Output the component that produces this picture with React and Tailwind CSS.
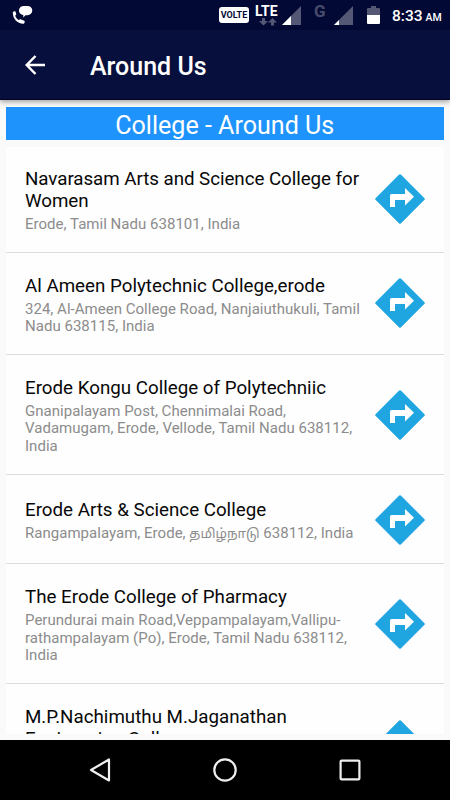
import React from "react";

const colleges = [
	{
		id: 1,
		height: "h-[106px] pt-[21px]",
		gap: "mt-[4.500px]",
		iconTop: "mt-[6px]",
		tracking: "tracking-[-0.05px]",
		title: ["Navarasam Arts and Science College for", "Women"],
		address: ["Erode, Tamil Nadu 638101, India"],
	},
	{
		id: 2,
		height: "h-[102px] pt-[22px]",
		gap: "mt-[4px]",
		iconTop: "mt-[3.5px]",
		title: ["Al Ameen Polytechnic College,erode"],
		address: ["324, Al-Ameen College Road, Nanjaiuthukuli, Tamil", "Nadu 638115, India"],
	},
	{
		id: 3,
		height: "h-[120.5px] pt-[22.5px]",
		gap: "mt-[3.5px]",
		iconTop: "mt-[12.5px]",
		title: ["Erode Kongu College of Polytechniic"],
		address: ["Gnanipalayam Post, Chennimalai Road,", "Vadamugam, Erode, Vellode, Tamil Nadu 638112,", "India"],
	},
	{
		id: 4,
		height: "h-[88.5px] pt-[24px]",
		gap: "mt-[3.5px]",
		iconTop: "mt-[-4.5px]",
		title: ["Erode Arts & Science College"],
		address: [
			<>
				Rangampalayam, Erode, <span className="text-[13.4px] leading-none">தமிழ்நாடு</span> 638112, India
			</>,
		],
	},
	{
		id: 5,
		height: "h-[120.5px] pt-[22px]",
		gap: "mt-[4.500px]",
		iconTop: "mt-[13px]",
		title: ["The Erode College of Pharmacy"],
		address: ["Perundurai main Road,Veppampalayam,Vallipu-", "rathampalayam (Po), Erode, Tamil Nadu 638112,", "India"],
	},
	{
		id: 6,
		height: "h-[120.5px] pt-[22px]",
		gap: "mt-[3.5px]",
		iconTop: "mt-[14px]",
		title: ["M.P.Nachimuthu M.Jaganathan", "Engineering College"],
		address: [],
	},
];

const DirectionsIcon = () => (
	<svg viewBox="0 0 50 50" className="w-[50px] h-[50px]">
		<path d="M24.2 .6q.8-.7 1.6 0L49.500 24.200q.7.800 0 1.600L25.800 49.400q-.8.700-1.600 0L.5 25.800q-.7-.8 0-1.600Z" fill="#1fa5e0" />
		<path d="M15 33V21.500q0-1.500 1.500-1.500H30V14l9 8.700-9 8.800V26H20v7Z" fill="#fff" />
	</svg>
);

const Signal = ({ level }) => (
	<svg viewBox="0 0 19 19" className="w-[19px] h-[19px]">
		<path d="M19 0v19H0Z" fill="#555875" />
		<path d={`M0 19L${level} ${19 - level}V19Z`} fill="#fff" />
	</svg>
);

const StatusBar = () => (
	<div className="flex h-[30px] shrink-0 bg-[#020935] pl-[12px] text-white">
		<svg viewBox="0 0 22 20" className="mt-[5px] w-[22px] h-[20px]" fill="#fff">
			<path d="M12 1h3.500a4.700 4.500 0 0 1 0 9.200h-2L11.300 12.400V10A4.700 4.500 0 0 1 12 1Z" />
			<path d="M1.600 6.600l1.200-.3q.8 0 .9.700l.5 2.300q.1.600-.5 1l-.6.500q1 2.800 3.600 4.400l.8-.8q.5-.4 1.100-.2l3.600 1.600q.7.300.5 1l-.3 1.200q-.2.700-.9.800C5.500 19 .8 14 .8 7.600q0-.7.800-1Z" />
		</svg>
		<div className="ml-[185px] mt-[7px] flex h-[16px] w-[30px] items-center justify-center rounded-[3px] bg-[#fefefe] text-[9px] font-bold leading-none text-[#020935]">
			VOLTE
		</div>
		<div className="ml-[6px] w-[23px] pt-[5px]">
			<div className="text-[14px] font-bold leading-[13px]">LTE</div>
			<svg viewBox="0 0 18 8" className="ml-[4px] w-[18px] h-[8px]" fill="#555875">
				<path d="M3 0h3v3h3L4.500 7.500 0 3h3Z" />
				<path d="M12 7.500h3v-3h3L13.500 0 9 4.500h3Z" />
			</svg>
		</div>
		<div className="ml-[4px] mt-[6px]"><Signal level={9} /></div>
		<div className="ml-[13px] mt-[3px] w-[14px] text-[17px] font-bold leading-[17px] text-[#484b6b]">G</div>
		<div className="ml-[6px] mt-[6px]"><Signal level={5} /></div>
		<svg viewBox="0 0 13 19" className="ml-[14px] mt-[6px] w-[13px] h-[19px]">
			<path d="M4 0h5v2h3q1 0 1 1v6H0V3q0-1 1-1h3Z" fill="#555875" />
			<path d="M0 9h13v8q0 1-1 1H1q-1 0-1-1Z" fill="#fff" />
		</svg>
		<div className="ml-[12px] flex items-baseline whitespace-nowrap pt-[7px] font-medium leading-[19px]">
			<span className="text-[15.5px]">8:33</span>
			<span className="ml-[3px] text-[10.5px]">AM</span>
		</div>
	</div>
);

const CollegeRow = ({ college }) => (
	<li className={`flex shrink-0 justify-between border-b-[1.5px] border-[#dcdcdc] px-[19px] ${college.height}`}>
		<div className="whitespace-nowrap">
			<h2 className={`text-[18.75px] leading-[22px] text-[#080808] ${college.tracking || ""}`}>
				{college.title.map((line, i) => <span key={i} className="block">{line}</span>)}
			</h2>
			<p className={`text-[15px] leading-[17.5px] tracking-[0.025px] text-[#8c8c8c] ${college.gap}`}>
				{college.address.map((line, i) => <span key={i} className="block h-[17.5px]">{line}</span>)}
			</p>
		</div>
		<div className={college.iconTop}>
			<DirectionsIcon />
		</div>
	</li>
);

const App = () => {
	return (
		<div className="flex h-[800px] w-[450px] flex-col overflow-hidden bg-[#fafafa] font-[Roboto,'Noto_Sans_Tamil','Noto_Sans',sans-serif]">
			<StatusBar />
			<header className="z-10 flex h-[70px] shrink-0 items-center border-b border-[#01041c] bg-[#07103d] pl-[25px] text-white shadow-[0_2px_5px_rgba(0,0,0,0.35)]">
				<svg viewBox="0 0 20 20" className="w-[20px] h-[20px]" fill="none" stroke="#fff" strokeWidth="2.5">
					<path d="M20 10H2M10.500 1L1.700 10l8.800 9" />
				</svg>
				<h1 className="ml-[45px] mt-[4px] text-[25px] font-medium leading-[30px]">Around Us</h1>
			</header>
			<main className="flex min-h-0 flex-1 flex-col pl-[6px] pr-[6.5px] pb-[6.5px] pt-[6.5px]">
				<div className="h-[33.5px] shrink-0 bg-[#1f93fc] text-center text-[25.1px] leading-[37px] text-white">
					College - Around Us
				</div>
				<ul className="mt-[6.5px] flex min-h-0 flex-1 flex-col overflow-hidden bg-[#fefefe]">
					{colleges.map((college) => (
						<CollegeRow key={college.id} college={college} />
					))}
				</ul>
			</main>
			<nav className="flex h-[60px] shrink-0 items-center bg-black pl-[89px]">
				<svg viewBox="0 0 22 24" className="w-[22px] h-[24px]" fill="none" stroke="#eee" strokeWidth="2.2" strokeLinejoin="round">
					<path d="M20 1.500v21L2 12Z" />
				</svg>
				<svg viewBox="0 0 24 24" className="ml-[102px] w-[24px] h-[24px]" fill="none" stroke="#eee" strokeWidth="2.2">
					<circle cx="12" cy="12" r="10.7" />
				</svg>
				<svg viewBox="0 0 22 22" className="ml-[102px] w-[22px] h-[22px]" fill="none" stroke="#eee" strokeWidth="2.2">
					<rect x="1.6" y="1.6" width="18.8" height="18.8" rx="1" />
				</svg>
			</nav>
		</div>
	);
};

export default App;
